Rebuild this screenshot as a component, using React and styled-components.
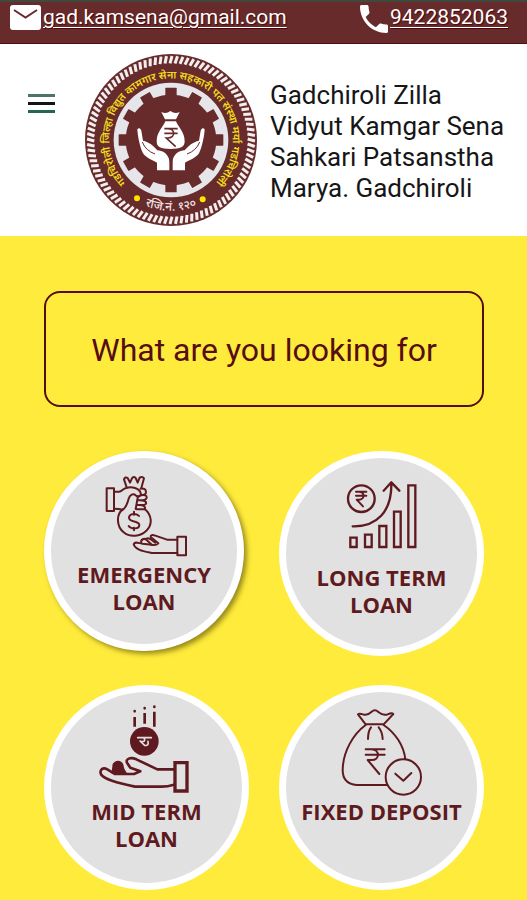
import React from 'react';
import styled, { createGlobalStyle } from 'styled-components';

const maroon = '#5f1a20';

const GlobalStyle = createGlobalStyle`
  * {
    box-sizing: border-box;
  }
  html,
  body {
    min-height: 100%;
  }
  body {
    margin: 0;
    background: #ffeb3b;
    font-family: Roboto, 'Liberation Sans', sans-serif;
  }
`;

const TopBar = styled.div`
  display: flex;
  justify-content: space-between;
  align-items: flex-start;
  height: 44px;
  padding: 3px 19px 0 10px;
  background: #682b2c;
  border-top: 2px solid #43483f;
  border-bottom: 1px solid #520c10;
`;

const ContactLink = styled.a`
  display: flex;
  align-items: flex-start;
  gap: 2px;
  color: #fff;
  font-size: 21px;
  line-height: 24px;
  text-decoration: underline;
  text-decoration-thickness: 1px;
  text-underline-offset: 3px;
  text-shadow: 1px 1px 1px #4a0508;
  svg {
    flex-shrink: 0;
  }
`;

const Header = styled.header`
  display: flex;
  align-items: center;
  padding: 9px 16px 9px 28px;
  background: #fff;
`;

const MenuButton = styled.button`
  align-self: flex-start;
  margin: 40px 29px 0 0;
  padding: 0;
  border: 0;
  background: none;
  svg {
    display: block;
  }
`;

const LogoSvg = styled.svg`
  flex-shrink: 0;
  width: 174px;
  height: 174px;
`;

const Title = styled.h1`
  flex: 1;
  margin: 4px 0 0 12px;
  color: #161616;
  font-size: 26px;
  font-weight: 400;
  line-height: 31px;
`;

const Main = styled.main`
  padding: 55px 43px 10px 44px;
`;

const Question = styled.h2`
  margin: 0 0 44px;
  padding: 39px 10px 37px;
  border: 2px solid #560d14;
  border-radius: 16px;
  color: #560d14;
  font-size: 32px;
  font-weight: 400;
  line-height: 36px;
  text-align: center;
`;

const Grid = styled.div`
  display: grid;
  grid-template-columns: 1fr 1fr;
  gap: 29px 30px;
`;

const Tile = styled.button`
  display: flex;
  flex-direction: column;
  align-items: center;
  aspect-ratio: 1;
  margin: ${(p) => (p.$raised ? '0 5px 5px 0' : '0')};
  padding: ${(p) => (p.$raised ? '7px' : '10px')} 0 0;
  border: 7px solid #fff;
  border-radius: 50%;
  background: #e1e1e1;
  box-shadow: ${(p) => (p.$raised ? '3px 3px 5px rgba(70, 60, 0, 0.55)' : 'none')};
  color: ${maroon};
  font-family: 'Open Sans', 'Noto Sans', sans-serif;
`;

const TileIcon = styled.svg`
  flex-shrink: 0;
  width: 110px;
  height: 92px;
  overflow: visible;
  fill: none;
  stroke: ${maroon};
  stroke-width: ${(p) => p.$stroke || 6};
  stroke-linecap: round;
  stroke-linejoin: round;
`;

const Caption = styled.span`
  margin-top: 4px;
  font-size: 22px;
  font-weight: 700;
  line-height: 27px;
  white-space: pre;
`;

const MailIcon = () => (
  <svg width="31" height="25" viewBox="0 0 31 25" aria-hidden="true">
    <rect width="31" height="25" rx="3" fill="#fff" />
    <path d="M4 5 L15.500 12.500 L27 5" fill="none" stroke="#682b2c" strokeWidth="2" />
  </svg>
);

const PhoneIcon = () => (
  <svg width="28" height="28" viewBox="3 3 18 18" aria-hidden="true">
    <path
      fill="#fff"
      d="M6.620 10.790c1.440 2.830 3.760 5.140 6.590 6.590l2.200-2.200c.27-.27.67-.36 1.020-.24 1.120.37 2.330.57 3.570.57.55 0 1 .45 1 1V20c0 .55-.45 1-1 1-9.390 0-17-7.610-17-17 0-.55.45-1 1-1h3.500c.55 0 1 .45 1 1 0 1.250.2 2.450.57 3.570.11.35.03.74-.25 1.020l-2.200 2.200z"
    />
  </svg>
);

const ticks = Array.from({ length: 96 }, (_, i) => (i * 360) / 96);
const teeth = Array.from({ length: 12 }, (_, i) => i * 30);

const Hand = () => (
  <path d="M-5 91 H-42 V68 C-58 60 -76 52 -84 40 C-93 22 -100 -12 -101 -32 C-97 -38 -91 -36 -89 -28 L-84 2 C-66 6 -52 17 -41 31 C-27 31 -5 42 -5 66 Z" />
);

const Logo = () => (
  <LogoSvg viewBox="-261 -261 522 522" role="img" aria-label="Kamgar Sena">
    <defs>
      <path id="ring" d="M-131 131 A185 185 0 1 1 131 131" />
      <path id="foot" d="M-150 150 A212 212 0 0 0 150 150" />
    </defs>
    <circle r="258" fill="#682b2c" />
    {ticks.map((a) => (
      <path key={a} d="M-3 -230 L3 -252" stroke="#f4eeee" strokeWidth="9" transform={`rotate(${a})`} />
    ))}
    <circle r="172" fill="#e6e6ea" />
    <g fill="#682b2c">
      <circle r="136" />
      {teeth.map((a) => (
        <rect key={a} x="-17" y="-157" width="34" height="40" rx="2" transform={`rotate(${a})`} />
      ))}
    </g>
    <g fill="#fff">
      <path d="M-29 -84 Q-14 -77 -2 -87 Q12 -77 26 -84 L15 -62 H-18 Z" />
      <path d="M-17 -56 H15 C22 -38 41 -24 41 4 C41 22 28 27 -1 27 C-31 27 -43 22 -43 4 C-43 -24 -24 -38 -17 -56 Z" />
      <Hand />
      <g transform="scale(-1 1)">
        <Hand />
      </g>
    </g>
    <path
      d="M-20 -34 H20 M-20 -20 H20 M-10 -34 C14 -34 14 -6 -10 -6 H-14 L14 20"
      fill="none"
      stroke="#682b2c"
      strokeWidth="5"
    />
    <path
      d="M-86 6 Q-76 32 -48 42 M86 6 Q76 32 48 42"
      fill="none"
      stroke="#682b2c"
      strokeWidth="3"
    />
    <g fontFamily="'Noto Sans Devanagari', 'Noto Sans', sans-serif">
      <text fill="#f3dc1c" fontSize="32" fontWeight="600" textAnchor="middle">
        <textPath href="#ring" startOffset="50%">
          गडचिरोली जिल्हा विद्युत कामगार सेना सहकारी पत संस्था मर्या गडचिरोली
        </textPath>
      </text>
      <text fill="#f1e4e4" fontSize="36" fontWeight="500" textAnchor="middle">
        <textPath href="#foot" startOffset="50%">
          रजि.नं. १२०
        </textPath>
      </text>
    </g>
    <circle cx="-102" cy="175" r="9" fill="#ffe600" />
    <circle cx="95" cy="178" r="9" fill="#ffe600" />
  </LogoSvg>
);

const EmergencyIcon = () => (
  <TileIcon viewBox="0 0 330 276" $stroke={6}>
    <path d="M53 70 H75 V138 H53 Z" />
    <path d="M75 80 H90 C99 80 101 71 112 69 C128 64 151 69 155 84 C158 94 147 98 140 91 C132 84 123 89 119 101 C115 116 112 128 101 134 C94 132 86 131 75 131" />
    <path d="M113 67 L105 43 Q109 34 116 39 L123 53 L130 38 Q136 33 140 39 L146 53 L152 38 Q160 33 165 40 L157 69" />
    <path d="M155 71 Q171 69 171 81 Q171 90 157 90 M155 91 Q174 88 173 98 Q171 107 150 106 M149 106 Q174 105 171 116 Q168 121 146 120 M147 120 Q171 119 168 133 H143 M147 93 L140 132" />
    <path d="M102 133 C80 148 83 185 104 202 C124 219 154 214 172 197 C193 177 187 149 168 133" />
    <path d="M150 153 C144 144 121 144 120 158 C119 173 150 166 151 180 C151 193 126 193 119 183 M135 140 V149 M135 188 V196" />
    <path d="M265 215 H291 V271 H265 Z" />
    <path d="M265 224 H234 L199 212 Q184 207 185 216 L208 235 Q201 242 188 239 L160 236 C147 234 137 229 134 238 C139 255 165 259 188 264 H265" />
    <path d="M157 234 C154 223 166 218 173 225 L188 239 M170 223 Q174 217 184 222 L199 233" />
  </TileIcon>
);

const GrowthIcon = () => (
  <TileIcon viewBox="-10 -6 330 276" $stroke={7}>
    <circle cx="93" cy="86" r="40" />
    <path d="M77 65 H108 M77 77 H108 M86 65 C104 65 104 89 86 89 H79 L98 109" strokeWidth="6" />
    <path d="M67 169 C138 171 185 126 183 39 M160 62 L183 37 L207 62" />
    <path
      d="M60 203 H79 V231 H60 Z M104 194 H124 V231 H104 Z M147 168 H168 V231 H147 Z M191 125 H211 V231 H191 Z M234 46 H255 V231 H234 Z"
      strokeLinejoin="miter"
    />
  </TileIcon>
);

const CoinHandIcon = () => (
  <TileIcon viewBox="22 21 330 276" $stroke={8}>
    <path d="M150 66 V95 M180 54 V86 M209 50 V95" strokeLinecap="butt" />
    <path d="M150 48 V49 M180 39 V40 M209 35 V36" />
    <circle cx="179" cy="139" r="43" fill={maroon} stroke="none" />
    <path d="M159 128 H200 M178 128 Q185 144 166 138 L180 151 Q193 154 190 139" stroke="#e1e1e1" strokeWidth="5" />
    <path d="M81 236 C80 226 83 222 83 214 C83 204 91 197 100 197 C110 197 117 205 117 214 C118 222 122 226 128 236 Z" fill={maroon} stroke="none" />
    <path d="M268 223 H218 L155 193 C137 185 122 192 127 203 L137 218 L167 229 L148 237 H90 L68 223 C54 215 44 225 49 238 C61 254 97 263 151 275 H230 Q249 275 268 269" />
    <path d="M271 203 H307 V288 H271 Z" strokeLinejoin="miter" strokeWidth="10" />
  </TileIcon>
);

const MoneyBagIcon = () => (
  <TileIcon viewBox="5 6 330 276" $stroke={6}>
    <path d="M121 73 L98 43 Q101 39 113 43 Q125 48 139 35 Q149 26 159 36 Q174 48 187 43 Q200 37 204 42 L175 73 Z" />
    <path d="M121 75 C84 102 53 154 52 210 C52 241 69 253 94 255 H190 M175 75 C210 99 236 137 240 179" />
    <path d="M137 82 Q128 93 128 117 M160 82 Q171 95 172 117" />
    <path d="M121 148 H178 M121 164 H178 M139 148 C164 150 164 180 139 180 H127 L162 222" />
    <circle cx="234" cy="231" r="53" fill="#e1e1e1" />
    <path d="M210 221 L234 242 L258 219" />
  </TileIcon>
);

const services = [
  { label: 'EMERGENCY\nLOAN', Icon: EmergencyIcon, raised: true },
  { label: 'LONG TERM\nLOAN', Icon: GrowthIcon },
  { label: 'MID TERM\nLOAN', Icon: CoinHandIcon },
  { label: 'FIXED DEPOSIT', Icon: MoneyBagIcon },
];

export default function App() {
  return (
    <>
      <GlobalStyle />
      <TopBar>
        <ContactLink href="mailto:gad.kamsena@gmail.com">
          <MailIcon />
          gad.kamsena@gmail.com
        </ContactLink>
        <ContactLink href="tel:9422852063">
          <PhoneIcon />
          9422852063
        </ContactLink>
      </TopBar>
      <Header>
        <MenuButton aria-label="Menu">
          <svg width="27" height="20" viewBox="0 0 27 20">
            <path d="M0 2.500 H27" stroke="#4c7568" strokeWidth="3" />
            <path d="M0 10.500 H27" stroke="#141414" strokeWidth="3" />
            <path d="M0 18.500 H27" stroke="#256654" strokeWidth="3" />
          </svg>
        </MenuButton>
        <Logo />
        <Title>
          Gadchiroli Zilla
          <br />
          Vidyut Kamgar Sena
          <br />
          Sahkari Patsanstha
          <br />
          Marya. Gadchiroli
        </Title>
      </Header>
      <Main>
        <Question>What are you looking for</Question>
        <Grid>
          {services.map(({ label, Icon, raised }) => (
            <Tile key={label} $raised={raised}>
              <Icon />
              <Caption>{label}</Caption>
            </Tile>
          ))}
        </Grid>
      </Main>
    </>
  );
}
